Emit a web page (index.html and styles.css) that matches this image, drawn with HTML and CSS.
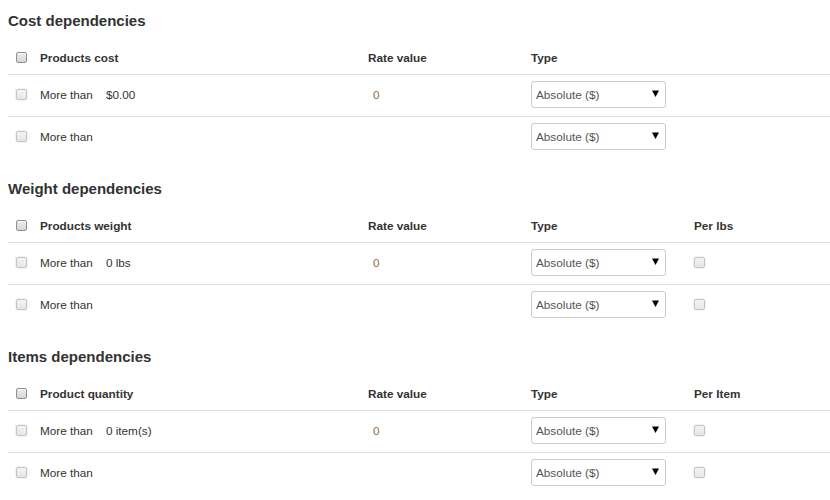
FILE: index.html
```html
<!DOCTYPE html>
<html>
<head>
<meta charset="utf-8">
<link rel="stylesheet" href="styles.css">
</head>
<body>
<div class="page">
  <section class="dep">
    <h3 class="dep-title">Cost dependencies</h3>
    <div class="grid head">
      <div class="c-check"><span class="cb"></span></div>
      <div>Products cost</div>
      <div>Rate value</div>
      <div>Type</div>
      <div></div>
    </div>
    <div class="grid row">
      <div class="c-check"><span class="cb dis"></span></div>
      <div class="cond">More than<span class="val">$0.00</span></div>
      <div class="rate">0</div>
      <div><div class="select"><span>Absolute ($)</span><svg width="7" height="7" viewBox="0 0 7 7"><path d="M0 0.5h7L3.5 7z" fill="#000"/></svg></div></div>
      <div></div>
    </div>
    <div class="grid row last">
      <div class="c-check"><span class="cb dis"></span></div>
      <div class="cond">More than</div>
      <div class="rate"></div>
      <div><div class="select"><span>Absolute ($)</span><svg width="7" height="7" viewBox="0 0 7 7"><path d="M0 0.5h7L3.5 7z" fill="#000"/></svg></div></div>
      <div></div>
    </div>
  </section>

  <section class="dep">
    <h3 class="dep-title">Weight dependencies</h3>
    <div class="grid head">
      <div class="c-check"><span class="cb"></span></div>
      <div>Products weight</div>
      <div>Rate value</div>
      <div>Type</div>
      <div>Per lbs</div>
    </div>
    <div class="grid row">
      <div class="c-check"><span class="cb dis"></span></div>
      <div class="cond">More than<span class="val">0 lbs</span></div>
      <div class="rate">0</div>
      <div><div class="select"><span>Absolute ($)</span><svg width="7" height="7" viewBox="0 0 7 7"><path d="M0 0.5h7L3.5 7z" fill="#000"/></svg></div></div>
      <div class="c-per"><span class="cb dis"></span></div>
    </div>
    <div class="grid row last">
      <div class="c-check"><span class="cb dis"></span></div>
      <div class="cond">More than</div>
      <div class="rate"></div>
      <div><div class="select"><span>Absolute ($)</span><svg width="7" height="7" viewBox="0 0 7 7"><path d="M0 0.5h7L3.5 7z" fill="#000"/></svg></div></div>
      <div class="c-per"><span class="cb dis"></span></div>
    </div>
  </section>

  <section class="dep">
    <h3 class="dep-title">Items dependencies</h3>
    <div class="grid head">
      <div class="c-check"><span class="cb"></span></div>
      <div>Product quantity</div>
      <div>Rate value</div>
      <div>Type</div>
      <div>Per Item</div>
    </div>
    <div class="grid row">
      <div class="c-check"><span class="cb dis"></span></div>
      <div class="cond">More than<span class="val">0 item(s)</span></div>
      <div class="rate">0</div>
      <div><div class="select"><span>Absolute ($)</span><svg width="7" height="7" viewBox="0 0 7 7"><path d="M0 0.5h7L3.5 7z" fill="#000"/></svg></div></div>
      <div class="c-per"><span class="cb dis"></span></div>
    </div>
    <div class="grid row last">
      <div class="c-check"><span class="cb dis"></span></div>
      <div class="cond">More than</div>
      <div class="rate"></div>
      <div><div class="select"><span>Absolute ($)</span><svg width="7" height="7" viewBox="0 0 7 7"><path d="M0 0.5h7L3.5 7z" fill="#000"/></svg></div></div>
      <div class="c-per"><span class="cb dis"></span></div>
    </div>
  </section>
</div>
</body>
</html>
```

FILE: styles.css
```css
html, body {
  margin: 0;
  padding: 0;
  background: #fff;
}
body {
  font-family: "Liberation Sans", Arial, sans-serif;
  font-size: 11.75px;
  color: #333;
}
.page {
  padding: 11px 0 0 8px;
}
.dep {
  margin-bottom: 20px;
}
.dep-title {
  margin: 0 0 12px 0;
  font-size: 15px;
  line-height: 20px;
  font-weight: bold;
  color: #333;
}
.grid {
  display: grid;
  grid-template-columns: 32px 328px 163px 163px 1fr;
  align-items: center;
}
.head {
  height: 32px;
  padding-bottom: 2px;
  font-weight: bold;
  border-bottom: 1px solid #ddd;
  box-sizing: border-box;
}
.row {
  height: 42px;
  padding-bottom: 2px;
  border-bottom: 1px solid #ddd;
  box-sizing: border-box;
}
.row.last {
  border-bottom-color: transparent;
}
.c-check {
  padding-left: 8px;
  display: flex;
  align-items: center;
}
.c-per {
  display: flex;
  align-items: center;
}
.cb {
  display: inline-block;
  width: 9px;
  height: 9px;
  border: 1px solid #8f8f8f;
  border-radius: 2px;
  background: linear-gradient(#ececec, #d6d6d6);
  box-shadow: inset 0 1px 0 #fff;
}
.cb.dis {
  border-color: #c4c4c4;
  background: linear-gradient(#f4f4f4, #e6e6e6);
  box-shadow: 0 0 0 1px #f3f3f3;
}
.cond {
  color: #333;
}
.val {
  margin-left: 13px;
}
.rate {
  padding-left: 5px;
  color: #8a6d3b;
}
.select {
  width: 135px;
  height: 27px;
  box-sizing: border-box;
  border: 1px solid #ccc;
  border-radius: 3px;
  display: flex;
  align-items: center;
  justify-content: space-between;
  padding: 0 6px 0 4px;
  color: #555;
  background: #fff;
}
.select svg {
  display: block;
  margin-top: -3px;
}
```
